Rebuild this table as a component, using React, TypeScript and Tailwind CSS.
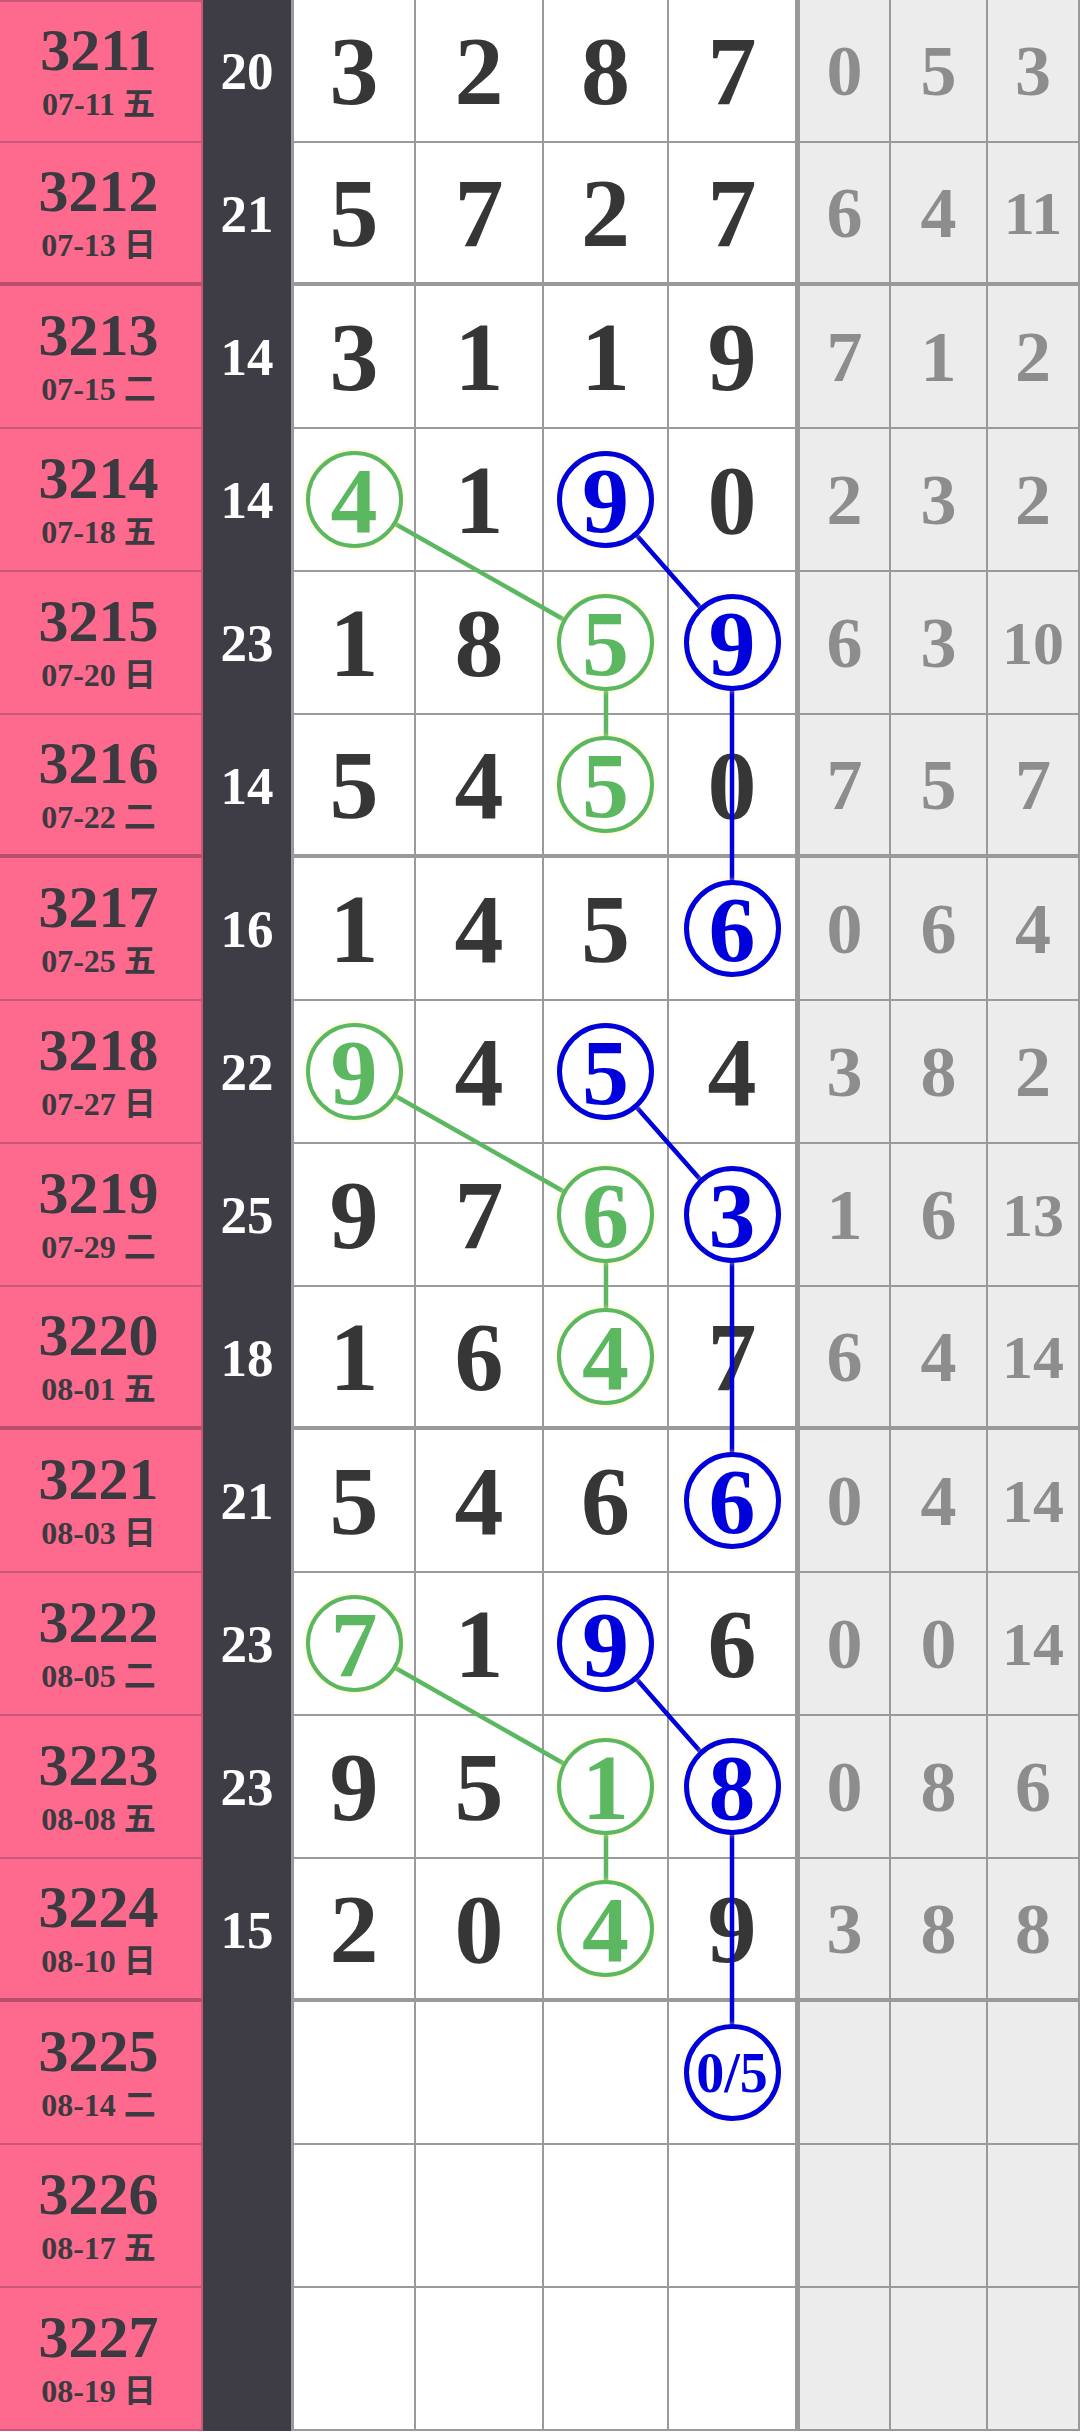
type Row = {
  id: string;
  date: string;
  sum?: number;
  nums?: number[];
  miss?: number[];
};

const rows: Row[] = [
  { id: "3211", date: "07-11 五", sum: 20, nums: [3, 2, 8, 7], miss: [0, 5, 3] },
  { id: "3212", date: "07-13 日", sum: 21, nums: [5, 7, 2, 7], miss: [6, 4, 11] },
  { id: "3213", date: "07-15 二", sum: 14, nums: [3, 1, 1, 9], miss: [7, 1, 2] },
  { id: "3214", date: "07-18 五", sum: 14, nums: [4, 1, 9, 0], miss: [2, 3, 2] },
  { id: "3215", date: "07-20 日", sum: 23, nums: [1, 8, 5, 9], miss: [6, 3, 10] },
  { id: "3216", date: "07-22 二", sum: 14, nums: [5, 4, 5, 0], miss: [7, 5, 7] },
  { id: "3217", date: "07-25 五", sum: 16, nums: [1, 4, 5, 6], miss: [0, 6, 4] },
  { id: "3218", date: "07-27 日", sum: 22, nums: [9, 4, 5, 4], miss: [3, 8, 2] },
  { id: "3219", date: "07-29 二", sum: 25, nums: [9, 7, 6, 3], miss: [1, 6, 13] },
  { id: "3220", date: "08-01 五", sum: 18, nums: [1, 6, 4, 7], miss: [6, 4, 14] },
  { id: "3221", date: "08-03 日", sum: 21, nums: [5, 4, 6, 6], miss: [0, 4, 14] },
  { id: "3222", date: "08-05 二", sum: 23, nums: [7, 1, 9, 6], miss: [0, 0, 14] },
  { id: "3223", date: "08-08 五", sum: 23, nums: [9, 5, 1, 8], miss: [0, 8, 6] },
  { id: "3224", date: "08-10 日", sum: 15, nums: [2, 0, 4, 9], miss: [3, 8, 8] },
  { id: "3225", date: "08-14 二" },
  { id: "3226", date: "08-17 五" },
  { id: "3227", date: "08-19 日" },
];

// circled cells: "row-col" -> colour
const marks: Record<string, "g" | "b"> = {
  "3-0": "g", "4-2": "g", "5-2": "g",
  "3-2": "b", "4-3": "b", "6-3": "b",
  "7-0": "g", "8-2": "g", "9-2": "g",
  "7-2": "b", "8-3": "b", "10-3": "b",
  "11-0": "g", "12-2": "g", "13-2": "g",
  "11-2": "b", "12-3": "b", "14-3": "b",
};

const links: [number, number, number, number, string][] = [
  [3, 0, 4, 2, "#5cb860"], [4, 2, 5, 2, "#5cb860"],
  [7, 0, 8, 2, "#5cb860"], [8, 2, 9, 2, "#5cb860"],
  [11, 0, 12, 2, "#5cb860"], [12, 2, 13, 2, "#5cb860"],
  [3, 2, 4, 3, "#0000dc"], [4, 3, 6, 3, "#0000dc"],
  [7, 2, 8, 3, "#0000dc"], [8, 3, 10, 3, "#0000dc"],
  [11, 2, 12, 3, "#0000dc"], [12, 3, 14, 3, "#0000dc"],
];

const colX = [354, 480, 606, 732];
const ROW_H = 143;
const thickRows = [1, 5, 9, 13];

function Circle({ color, text }: { color: "g" | "b"; text: string }) {
  const small = text.length > 1;
  return (
    <div
      className={
        "relative z-10 flex h-[97px] w-[97px] items-center justify-center rounded-full bg-white leading-none shadow-[0_0_5px_rgba(255,235,140,0.7)] " +
        (color === "g"
          ? "border-4 border-[#5cb860] text-[#5cb860] "
          : "border-[5px] border-[#0000dc] text-[#0000dc] ") +
        (small ? "text-[56px]" : "text-[94px]")
      }
    >
      {text}
    </div>
  );
}

export default function App() {
  return (
    <div className="relative isolate w-[1080px] font-['Liberation_Serif','Noto_Sans_CJK_SC',serif] font-bold">
      <div className="grid grid-cols-[203px_88px_125px_128px_125px_126px_96px_97px_92px] auto-rows-[143px]">
        {rows.map((r, i) => {
          const thick = thickRows.includes(i);
          const rb = thick ? " border-b-4" : " border-b-2";
          return [
            <div
              key={r.id + "a"}
              className={
                "flex flex-col items-center justify-center gap-2 border-r-2 border-[#c9577a] bg-[#fd6a8d] pr-1 pb-1 leading-none text-[#3b3a40]" +
                (thick ? " border-b-4 border-b-[#b94d6c]" : " border-b-2") +
                (i === 0 ? " border-t-2" : "")
              }
            >
              <div className="text-[60px]">{r.id}</div>
              <div className="text-[32px]">{r.date}</div>
            </div>,
            <div
              key={r.id + "b"}
              className="flex items-center justify-center bg-[#3e3d46] text-[53px] leading-none text-white"
            >
              {r.sum ?? ""}
            </div>,
            ...[0, 1, 2, 3].map((c) => {
              const m = marks[i + "-" + c];
              const v = r.nums ? String(r.nums[c]) : i === 14 && c === 3 ? "0/5" : "";
              return (
                <div
                  key={r.id + "n" + c}
                  className={
                    "flex items-center justify-center border-[#9a9a9a] bg-white text-[98px] leading-none text-[#363636]" +
                    rb +
                    (c === 0 ? " border-l-[3px]" : "") +
                    (c < 3 ? " border-r-2" : "")
                  }
                >
                  {m ? <Circle color={m} text={v} /> : v}
                </div>
              );
            }),
            ...[0, 1, 2].map((c) => {
              const v = r.miss ? r.miss[c] : undefined;
              return (
                <div
                  key={r.id + "m" + c}
                  className={
                    "flex items-center justify-center border-r-2 border-[#999999] bg-[#ececec] leading-none text-[#8d8d8d]" +
                    rb +
                    (c === 0 ? " border-l-[5px]" : "") +
                    (v !== undefined && v > 9 ? " text-[62px]" : " text-[72px]")
                  }
                >
                  {v ?? ""}
                </div>
              );
            }),
          ];
        })}
      </div>
      <svg
        className="pointer-events-none absolute inset-0 z-[5]"
        width="1080"
        height={rows.length * ROW_H}
      >
        {links.map(([r1, c1, r2, c2, col], k) => (
          <line
            key={k}
            x1={colX[c1]}
            y1={r1 * ROW_H + 71.5}
            x2={colX[c2]}
            y2={r2 * ROW_H + 71.5}
            stroke={col}
            strokeWidth={4.5}
          />
        ))}
      </svg>
    </div>
  );
}
